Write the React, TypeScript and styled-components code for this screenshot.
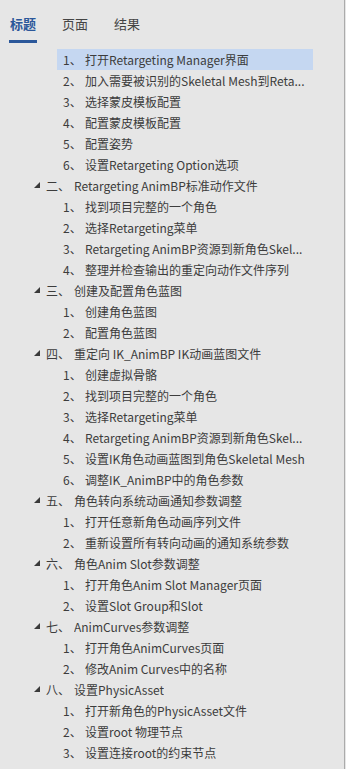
import React from 'react'
import styled, { createGlobalStyle } from 'styled-components'

const GlobalStyle = createGlobalStyle`
  html, body {
    margin: 0;
    padding: 0;
    background: #e6e6e6;
  }
  * { box-sizing: border-box; }
`

type Item = { level: 1 | 2; num: string; text: string; selected?: boolean }

// long titles are shown already shortened, as the outline pane does
const items: Item[] = [
  { level: 2, num: '1、', text: '打开Retargeting Manager界面', selected: true },
  { level: 2, num: '2、', text: '加入需要被识别的Skeletal Mesh到Reta...' },
  { level: 2, num: '3、', text: '选择蒙皮模板配置' },
  { level: 2, num: '4、', text: '配置蒙皮模板配置' },
  { level: 2, num: '5、', text: '配置姿势' },
  { level: 2, num: '6、', text: '设置Retargeting Option选项' },
  { level: 1, num: '二、', text: 'Retargeting AnimBP标准动作文件' },
  { level: 2, num: '1、', text: '找到项目完整的一个角色' },
  { level: 2, num: '2、', text: '选择Retargeting菜单' },
  { level: 2, num: '3、', text: 'Retargeting AnimBP资源到新角色Skel...' },
  { level: 2, num: '4、', text: '整理并检查输出的重定向动作文件序列' },
  { level: 1, num: '三、', text: '创建及配置角色蓝图' },
  { level: 2, num: '1、', text: '创建角色蓝图' },
  { level: 2, num: '2、', text: '配置角色蓝图' },
  { level: 1, num: '四、', text: '重定向 IK_AnimBP IK动画蓝图文件' },
  { level: 2, num: '1、', text: '创建虚拟骨骼' },
  { level: 2, num: '2、', text: '找到项目完整的一个角色' },
  { level: 2, num: '3、', text: '选择Retargeting菜单' },
  { level: 2, num: '4、', text: 'Retargeting AnimBP资源到新角色Skel...' },
  { level: 2, num: '5、', text: '设置IK角色动画蓝图到角色Skeletal Mesh' },
  { level: 2, num: '6、', text: '调整IK_AnimBP中的角色参数' },
  { level: 1, num: '五、', text: '角色转向系统动画通知参数调整' },
  { level: 2, num: '1、', text: '打开任意新角色动画序列文件' },
  { level: 2, num: '2、', text: '重新设置所有转向动画的通知系统参数' },
  { level: 1, num: '六、', text: '角色Anim Slot参数调整' },
  { level: 2, num: '1、', text: '打开角色Anim Slot Manager页面' },
  { level: 2, num: '2、', text: '设置Slot Group和Slot' },
  { level: 1, num: '七、', text: 'AnimCurves参数调整' },
  { level: 2, num: '1、', text: '打开角色AnimCurves页面' },
  { level: 2, num: '2、', text: '修改Anim Curves中的名称' },
  { level: 1, num: '八、', text: '设置PhysicAsset' },
  { level: 2, num: '1、', text: '打开新角色的PhysicAsset文件' },
  { level: 2, num: '2、', text: '设置root 物理节点' },
  { level: 2, num: '3、', text: '设置连接root的约束节点' },
]

const Pane = styled.div`
  width: 345px;
  height: 769px;
  border-right: 1px solid #ababab;
  background: #e6e6e6;
  font-family: "Noto Sans CJK SC", "Microsoft YaHei", sans-serif;
  color: #3c3c3c;
  overflow: hidden;
`

const Tabs = styled.div`
  display: flex;
  gap: 24px;
  padding: 14px 0 0 9px;
  height: 49px;
`

const Tab = styled.div<{ $active?: boolean }>`
  font-size: 13px;
  line-height: 20px;
  height: 29px;
  padding: 0 1px 6px;
  color: ${p => (p.$active ? '#2b579a' : '#444')};
  font-weight: ${p => (p.$active ? 700 : 400)};
  border-bottom: 3px solid ${p => (p.$active ? '#2b579a' : 'transparent')};
`

const Tree = styled.div`
  display: flex;
  flex-direction: column;
`

const Row = styled.div<{ $level: 1 | 2; $selected?: boolean }>`
  display: flex;
  align-items: center;
  height: 21px;
  width: ${p => (p.$level === 1 ? 287 : 256)}px;
  margin-left: ${p => (p.$level === 1 ? 26 : 57)}px;
  padding: 0 0 1px 0;
  font-size: 12px;
  white-space: nowrap;
  background: ${p => (p.$selected ? '#c5d7f1' : 'transparent')};
`

const Toggle = styled.span`
  width: 20px;
  flex: none;
  display: flex;
  justify-content: center;
  padding-left: 2px;
`

const Num = styled.span<{ $level: 1 | 2 }>`
  flex: none;
  width: ${p => (p.$level === 1 ? 28 : 22)}px;
  margin-left: ${p => (p.$level === 1 ? 0 : 6)}px;
`

const Label = styled.span`
  overflow: hidden;
  min-width: 0;
`

const Arrow = () => (
  <svg width="6" height="6" viewBox="0 0 6 6">
    <polygon points="6,0 6,6 0,6" fill="#3a3a3a" />
  </svg>
)

export default function App() {
  return (
    <Pane>
      <GlobalStyle />
      <Tabs>
        <Tab $active>标题</Tab>
        <Tab>页面</Tab>
        <Tab>结果</Tab>
      </Tabs>
      <Tree>
        {items.map((it, i) => (
          <Row key={i} $level={it.level} $selected={it.selected}>
            {it.level === 1 && (
              <Toggle>
                <Arrow />
              </Toggle>
            )}
            <Num $level={it.level}>{it.num}</Num>
            <Label>{it.text}</Label>
          </Row>
        ))}
      </Tree>
    </Pane>
  )
}
